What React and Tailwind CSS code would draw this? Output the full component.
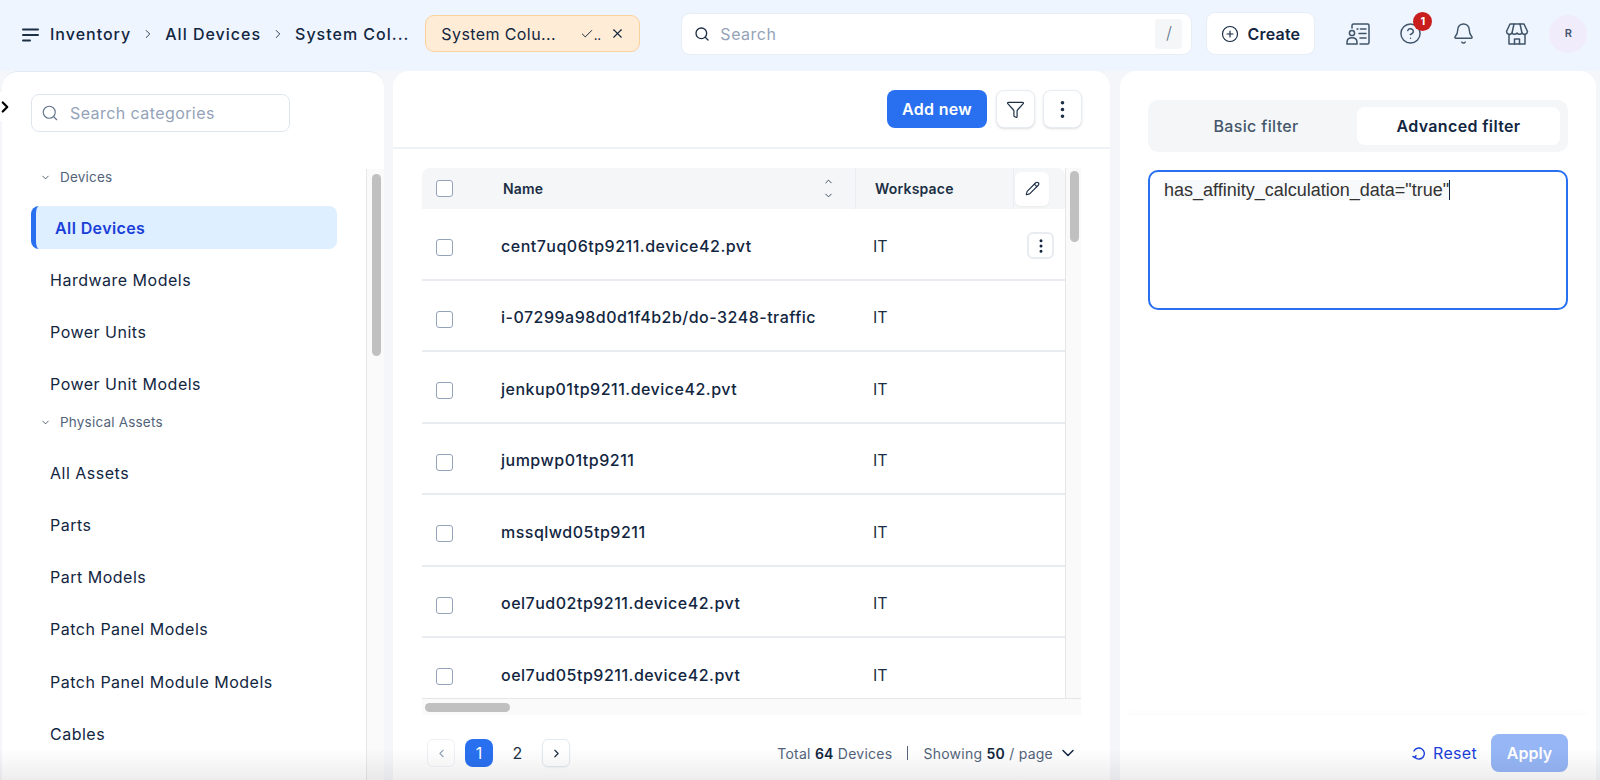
import React from "react";
import {
  Bell,
  Check,
  ChevronDown,
  ChevronLeft,
  ChevronRight,
  ChevronUp,
  CircleHelp,
  CirclePlus,
  EllipsisVertical,
  Funnel,
  Pencil,
  Search,
  X,
} from "lucide-react";

const groups = [
  { title: "Devices", items: ["All Devices", "Hardware Models", "Power Units", "Power Unit Models"] },
  {
    title: "Physical Assets",
    items: ["All Assets", "Parts", "Part Models", "Patch Panel Models", "Patch Panel Module Models", "Cables"],
  },
];

const rows = [
  "cent7uq06tp9211.device42.pvt",
  "i-07299a98d0d1f4b2b/do-3248-traffic",
  "jenkup01tp9211.device42.pvt",
  "jumpwp01tp9211",
  "mssqlwd05tp9211",
  "oel7ud02tp9211.device42.pvt",
  "oel7ud05tp9211.device42.pvt",
];

const Box = () => <span className="block w-[17px] h-[17px] rounded-[3px] border border-[#94a3b8] bg-white" />;

const ContactList = () => (
  <svg width="26" height="26" viewBox="0 0 26 26" fill="none" stroke="#3f5468" strokeWidth="1.5" strokeLinecap="round">
    <path d="M7 7V4.5A1.5 1.5 0 0 1 8.5 3h14A1.5 1.5 0 0 1 24 4.5v17a1.5 1.5 0 0 1-1.5 1.5H15" />
    <circle cx="7" cy="12" r="2.6" />
    <path d="M2 23v-1.5c0-3 2-4.7 5-4.7s5 1.700 5 4.700V23z" />
    <path d="M12 8h1M15.500 8H21M14 12.500h7M15 17h6" />
  </svg>
);

const Shop = () => (
  <svg width="26" height="26" viewBox="0 0 26 26" fill="none" stroke="#3f5468" strokeWidth="1.5" strokeLinecap="round" strokeLinejoin="round">
    <path d="M6 3h14l3.500 7.500a3 3 0 0 1-5.500 1.500a3 3 0 0 1-5 0a3 3 0 0 1-5 0a3 3 0 0 1-5.500-1.500z" />
    <path d="M10 3l-2 9M16 3l2 9" />
    <path d="M5 14v9h16v-9" />
    <path d="M10.500 23v-5h5v5" />
  </svg>
);

const SmallBtn = ({ children }) => (
  <button className="w-[39px] h-[38px] flex items-center justify-center rounded-lg bg-white border border-[#e8edf3] shadow-sm text-[#1c2f44]">
    {children}
  </button>
);

const HeadIcon = ({ children }) => (
  <div className="relative w-[53px] flex justify-center text-[#3f5468]">{children}</div>
);

const Header = () => (
  <header className="h-[71px] shrink-0 flex items-center pl-[22px] pb-[4px] bg-[#eef5ff]">
    <svg width="18" height="14" viewBox="0 0 18 14" className="mr-[10px] mt-[2px]" stroke="#1c2f44" strokeWidth="2" strokeLinecap="round">
      <path d="M1 1.500h15M1 7h15M1 12.500h7" />
    </svg>
    <nav className="flex items-center text-[16px] font-medium tracking-[1px] text-[#12263f]">
      <span>Inventory</span>
      <ChevronRight size={14} strokeWidth={1.5} className="mx-[10px]" />
      <span>All Devices</span>
      <ChevronRight size={14} strokeWidth={1.5} className="mx-[10px]" />
      <span>System Col...</span>
    </nav>
    <div className="ml-[16px] w-[215px] h-[37px] flex items-center pl-[15px] pr-[14px] rounded-[9px] bg-[#ffecd6] border border-[#fbd19c] text-[16px] font-normal tracking-[0.4px] text-[#12263f]">
      <span className="flex-1">System Colu...</span>
      <Check size={14} strokeWidth={1.7} />
      <span className="text-[10px] font-bold leading-none mt-[4px] mr-[9px]">..</span>
      <X size={15} strokeWidth={1.8} />
    </div>
    <div className="ml-[41px] w-[511px] h-[42px] flex items-center pl-[12px] pr-[9px] rounded-[9px] bg-white border border-[#e8eef6]">
      <Search size={16} strokeWidth={2} className="text-[#1c2f44]" />
      <span className="ml-[10px] flex-1 text-[16px] tracking-[0.5px] text-[#94a3b8]">Search</span>
      <span className="w-[27px] h-[30px] flex items-center justify-center rounded bg-[#f4f6f8] text-[#64748b] text-[17px] font-light">/</span>
    </div>
    <button className="ml-[14px] w-[109px] h-[43px] flex items-center justify-center gap-[8px] rounded-[9px] bg-white border border-[#e8eef6] text-[16px] font-semibold tracking-[0.2px] text-[#12263f]">
      <CirclePlus size={18} strokeWidth={1.5} />
      Create
    </button>
    <div className="ml-[16px] flex items-center">
      <HeadIcon><ContactList /></HeadIcon>
      <HeadIcon>
        <div className="relative">
          <CircleHelp size={23} strokeWidth={1.5} />
          <span className="absolute -top-[10px] -right-[10px] w-[19px] h-[19px] flex items-center justify-center rounded-full bg-[#c81e1e] text-white text-[11px] font-bold">1</span>
        </div>
      </HeadIcon>
      <HeadIcon><Bell size={23} strokeWidth={1.5} /></HeadIcon>
      <HeadIcon><Shop /></HeadIcon>
    </div>
    <div className="ml-[6px] w-[38px] h-[38px] flex items-center justify-center rounded-full bg-[#f1ecfc] text-[11px] font-semibold text-[#45556c]">R</div>
  </header>
);

const Sidebar = () => (
  <aside className="relative w-[382px] ml-[2px] shrink-0 flex flex-col rounded-t-2xl bg-white border-t border-[#e3e9f1] overflow-hidden">
    <div className="h-[97px] shrink-0 pt-[22px] pl-[29px]">
      <div className="w-[259px] h-[38px] flex items-center pl-[9px] rounded-lg border border-[#dfe5ee]">
        <Search size={18} strokeWidth={1.5} className="text-[#64748b]" />
        <span className="ml-[11px] text-[16px] tracking-[0.42px] text-[#94a3b8]">Search categories</span>
      </div>
    </div>
    <div className="flex flex-1 min-h-0">
      <div className="flex-1 pl-[29px] pr-[29px] overflow-hidden">
        {groups.map((group) => (
          <div key={group.title}>
            <div className="h-[16px] flex items-center pl-[9px] gap-[9px] text-[13.500px] tracking-[0.2px] text-[#52637a]">
              <ChevronDown size={11} strokeWidth={1.6} className="text-[#1c2f44]" />
              {group.title}
            </div>
            <div className="mt-[16.500px] mb-[4px]">
              {group.items.map((item) =>
                item === "All Devices" ? (
                  <div key={item} className="h-[52.200px] flex items-center">
                    <div className="w-full h-[43px] flex items-center pl-[19px] rounded-lg border-l-[5px] border-[#2970f0] bg-[#deefff] text-[16px] font-semibold tracking-[0.4px] text-[#1a3fd9]">
                      {item}
                    </div>
                  </div>
                ) : (
                  <div key={item} className="h-[52.200px] flex items-center pl-[19px] text-[16px] font-normal tracking-[0.5px] text-[#12263f]">
                    {item}
                  </div>
                )
              )}
            </div>
          </div>
        ))}
      </div>
      <div className="w-[18px] shrink-0 pl-[5px] pt-[5px] bg-[#fafafa] border-l border-[#e8e8e8]">
        <div className="w-[9px] h-[182px] rounded-full bg-[#c0c0c0]" />
      </div>
    </div>
  </aside>
);

const DeviceRow = ({ name, first }) => (
  <div className="h-[71.500px] shrink-0 flex items-center pt-[4px] border-b-2 border-[#e8ecf1]">
    <div className="w-[79px] pl-[14px] pt-[4px]"><Box /></div>
    <div className="w-[372px] text-[16px] font-medium tracking-[0.5px] text-[#12263f] whitespace-nowrap">{name}</div>
    <div className="flex-1 text-[16px] text-[#1c2f44]">IT</div>
    {first && (
      <button className="w-[27px] h-[27px] mr-[11px] flex items-center justify-center rounded-md border-2 border-[#e8ecf1] bg-white">
        <EllipsisVertical size={18} strokeWidth={2} className="text-[#12263f]" />
      </button>
    )}
  </div>
);

const DevicesPanel = () => (
  <main className="w-[717px] ml-[9px] shrink-0 flex flex-col rounded-t-2xl bg-white">
    <div className="h-[78px] shrink-0 flex items-center justify-end gap-[8px] pr-[28px] border-b-2 border-[#eef2f6]">
      <button className="w-[100px] h-[38px] mr-[1px] rounded-lg bg-[#2970f0] text-white text-[16px] font-semibold tracking-[0.3px]">Add new</button>
      <SmallBtn><Funnel size={19} strokeWidth={1.5} /></SmallBtn>
      <SmallBtn><EllipsisVertical size={23} strokeWidth={1.8} /></SmallBtn>
    </div>
    <div className="mx-[29px] mt-[19px] h-[547px] shrink-0 flex flex-col bg-[#fafafa]">
      <div className="flex flex-1 min-h-0">
        <div className="w-[644px] flex flex-col bg-white border-r border-[#e6e6e6] overflow-hidden">
          <div className="h-[41px] shrink-0 flex items-center rounded-t-lg bg-[#f4f6f8] text-[14px] font-semibold tracking-[0.2px] text-[#1c2f44]">
            <div className="w-[81px] pl-[14px]"><Box /></div>
            <div className="w-[353px] h-full flex items-center justify-between pr-[21px] border-r border-[#e9edf1]">
              Name
              <span className="flex flex-col text-[#1c2f44]">
                <ChevronUp size={11} strokeWidth={1.8} />
                <span className="h-[3px]" />
                <ChevronDown size={11} strokeWidth={1.8} />
              </span>
            </div>
            <div className="w-[158px] h-full flex items-center pl-[19px] border-r border-[#e9edf1]">Workspace</div>
            <div className="flex-1 flex pl-[1px]">
              <span className="w-[34px] h-[34px] flex items-center justify-center rounded-md bg-white shadow-xs">
                <Pencil size={15} strokeWidth={1.8} />
              </span>
            </div>
          </div>
          <div className="flex flex-col">
            {rows.map((name, i) => (
              <DeviceRow key={name} name={name} first={i === 0} />
            ))}
          </div>
        </div>
        <div className="flex-1 pt-[3px] pl-[4px]">
          <div className="w-[9px] h-[71px] rounded-full bg-[#c0c0c0]" />
        </div>
      </div>
      <div className="h-[17px] shrink-0 pl-[3px] pt-[4px] border-t border-[#e6e6e6]">
        <div className="w-[85px] h-[9px] rounded-full bg-[#c0c0c0]" />
      </div>
    </div>
    <div className="mx-[29px] mt-[24px] flex items-center justify-between">
      <div className="flex items-center pl-[5px] text-[16px] text-[#1c2f44]">
        <span className="w-[28px] h-[28px] flex items-center justify-center rounded-md border border-[#eef2f6] text-[#94a3b8]"><ChevronLeft size={13} /></span>
        <span className="ml-[10px] w-[28px] h-[28px] flex items-center justify-center rounded-lg bg-[#2970f0] text-white">1</span>
        <span className="w-[49px] text-center">2</span>
        <span className="w-[28px] h-[28px] flex items-center justify-center rounded-md border border-[#e3e9f1] shadow-xs"><ChevronRight size={13} strokeWidth={2.2} /></span>
      </div>
      <div className="flex items-center text-[14px] tracking-[0.25px] text-[#52637a]">
        <span>Total <b className="font-semibold text-[#12263f]">64</b> Devices</span>
        <span className="mx-[15px] w-px h-[14px] bg-[#52637a]" />
        <span>Showing <b className="font-semibold text-[#12263f]">50</b> / page</span>
        <ChevronDown size={20} strokeWidth={1.8} className="ml-[5px] mr-[3px] text-[#12263f]" />
      </div>
    </div>
  </main>
);

const FilterPanel = () => (
  <section className="w-[476px] ml-[10px] shrink-0 flex flex-col rounded-t-2xl bg-white">
    <div className="flex-1 pt-[29px] pl-[28px] pr-[28px]">
      <div className="h-[52px] flex items-center px-[7px] rounded-[10px] bg-[#f4f6f8] text-[16px] tracking-[0.35px]">
        <div className="w-[202px] text-center font-medium text-[#45566a]">Basic filter</div>
        <div className="w-[203px] h-[38px] flex items-center justify-center rounded-lg bg-white font-semibold text-[#12263f]">Advanced filter</div>
      </div>
      <div className="mt-[18px] h-[140px] rounded-[10px] border-2 border-[#2970f0] px-[14px] pt-[5px] font-['Liberation_Sans',Arial,sans-serif] text-[18px] leading-[26px] text-[#333333]">
        <span className="bg-[#f8f9fa] border-r border-[#12263f]">has_affinity_calculation_data="true"</span>
      </div>
    </div>
    <div className="h-[65px] shrink-0 flex items-start justify-end pt-[19px] pr-[28px] shadow-[0_-6px_10px_-8px_rgba(0,0,0,0.06)]">
      <button className="h-[37px] flex items-center gap-[7px] mr-[14px] text-[16px] tracking-[0.3px] text-[#1a3fd9]">
        <svg width="14" height="14" viewBox="0 0 14 14" fill="none" stroke="currentColor" strokeWidth="1.400" strokeLinecap="round">
          <path d="M3 11.500A5.500 5.500 0 1 0 2 5" />
          <path d="M1 10.500l2 1 1-1.800" />
        </svg>
        Reset
      </button>
      <button className="w-[77px] h-[38px] rounded-lg bg-[#96b6f6] text-white text-[16px] font-semibold">Apply</button>
    </div>
  </section>
);

export default function App() {
  return (
    <div className="relative h-[780px] flex flex-col overflow-hidden bg-[#f4f6f9] font-['Inter',sans-serif]">
      <Header />
      <div className="flex flex-1 min-h-0 bg-[#f4f6f9]">
        <Sidebar />
        <DevicesPanel />
        <FilterPanel />
      </div>
      <span className="absolute left-[-14px] top-[92px] w-[29px] h-[29px] flex items-center justify-center rounded-full bg-white">
        <ChevronRight size={18} strokeWidth={3} className="ml-[8px] text-black" />
      </span>
      <div className="pointer-events-none absolute inset-x-0 bottom-0 h-[32px] bg-gradient-to-b from-transparent to-[#00000012]" />
    </div>
  );
}
